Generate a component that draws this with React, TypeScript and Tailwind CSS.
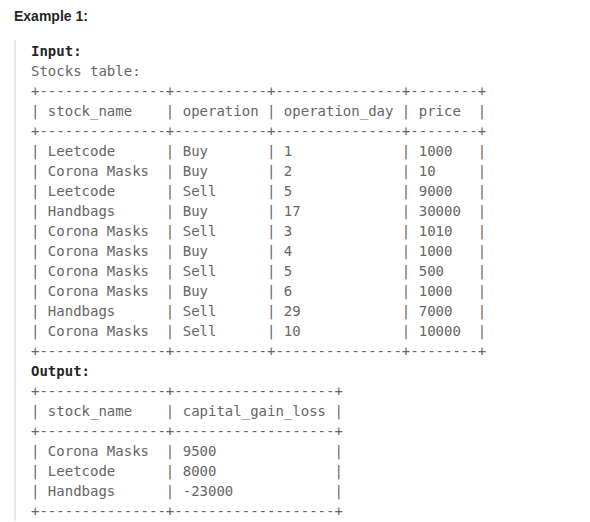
export default function App() {
  const input = `Stocks table:
+---------------+-----------+---------------+--------+
| stock_name    | operation | operation_day | price  |
+---------------+-----------+---------------+--------+
| Leetcode      | Buy       | 1             | 1000   |
| Corona Masks  | Buy       | 2             | 10     |
| Leetcode      | Sell      | 5             | 9000   |
| Handbags      | Buy       | 17            | 30000  |
| Corona Masks  | Sell      | 3             | 1010   |
| Corona Masks  | Buy       | 4             | 1000   |
| Corona Masks  | Sell      | 5             | 500    |
| Corona Masks  | Buy       | 6             | 1000   |
| Handbags      | Sell      | 29            | 7000   |
| Corona Masks  | Sell      | 10            | 10000  |
+---------------+-----------+---------------+--------+`;

  const output = `+---------------+-------------------+
| stock_name    | capital_gain_loss |
+---------------+-------------------+
| Corona Masks  | 9500              |
| Leetcode      | 8000              |
| Handbags      | -23000            |
+---------------+-------------------+`;

  return (
    <div className="min-h-screen bg-white pl-[14px] pt-[6px]">
      <p className="font-['Liberation_Sans','Noto_Sans',sans-serif] text-[14px] leading-[20px] font-bold text-[#262626]">
        Example 1:
      </p>
      <pre className="mt-[14px] border-l-2 border-[#e8e8e8] pl-[15px] pt-[1px] font-['DejaVu_Sans_Mono',monospace] text-[14px] leading-[20px] text-[#666666] whitespace-pre">
        <strong className="text-[#262626]">Input:</strong>
        {"\n"}
        {input}
        {"\n"}
        <strong className="text-[#262626]">Output:</strong>
        {"\n"}
        {output}
      </pre>
    </div>
  );
}
